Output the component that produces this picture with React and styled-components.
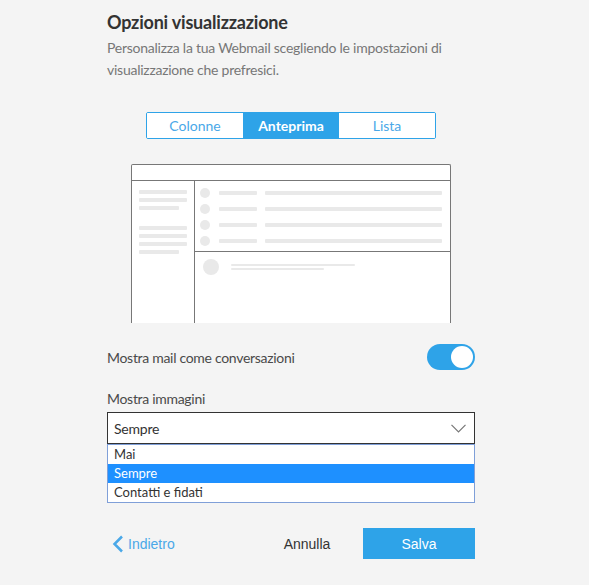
import React, { useState } from "react";
import styled, { createGlobalStyle } from "styled-components";

const GlobalStyle = createGlobalStyle`
  html, body {
    margin: 0;
    padding: 0;
    background: #f4f4f4;
  }
  body {
    font-family: Lato, "Open Sans", sans-serif;
  }
`;

const Page = styled.div`
  width: 368px;
  margin-left: 107px;
  padding-top: 10px;
`;

const Title = styled.h1`
  margin: 0;
  font-size: 18px;
  line-height: 24px;
  font-weight: 700;
  letter-spacing: -0.2px;
  color: #333;
`;

const Description = styled.p`
  margin: 3px 0 0;
  font-size: 14px;
  line-height: 22px;
  letter-spacing: -0.25px;
  color: #777;
`;

const Tabs = styled.div`
  display: flex;
  width: 288px;
  margin: 31px auto 0;
  border: 1px solid #2ea3e8;
  border-radius: 2px;
  background: #fff;
  overflow: hidden;
`;

const Tab = styled.button`
  flex: 1;
  height: 25px;
  border: 0;
  padding: 0;
  font-family: inherit;
  font-size: 14px;
  font-weight: ${(p) => (p.$active ? 700 : 400)};
  color: ${(p) => (p.$active ? "#fff" : "#4aa8e8")};
  background: ${(p) => (p.$active ? "#2ea3e8" : "#fff")};
  cursor: pointer;
`;

const Preview = styled.div`
  width: 318px;
  height: 158px;
  margin: 25px auto 0;
  border: 1px solid #777;
  border-bottom: 0;
  border-radius: 2px 2px 0 0;
  background: #fff;
  display: flex;
  flex-direction: column;
`;

const PreviewHeader = styled.div`
  height: 15px;
  border-bottom: 1px solid #777;
`;

const PreviewBody = styled.div`
  flex: 1;
  display: flex;
`;

const Sidebar = styled.div`
  width: 63px;
  border-right: 1px solid #777;
  padding: 9px 0 0 7px;
  box-sizing: border-box;
  display: flex;
  flex-direction: column;
  gap: 4px;
`;

const SideGroup = styled.div`
  display: flex;
  flex-direction: column;
  gap: 4px;
  margin-bottom: ${(p) => (p.$last ? 0 : "12px")};
`;

const Bar = styled.div`
  width: ${(p) => p.$w}px;
  height: ${(p) => p.$h || 4}px;
  margin-left: ${(p) => p.$ml || 0}px;
  background: #e9e9e9;
  border-radius: 1px;
`;

const MainPane = styled.div`
  flex: 1;
  display: flex;
  flex-direction: column;
`;

const MailList = styled.div`
  height: 71px;
  border-bottom: 1px solid #777;
  padding: 7px 0 0 5px;
  box-sizing: border-box;
  display: flex;
  flex-direction: column;
  gap: 6px;
`;

const MailRow = styled.div`
  display: flex;
  align-items: center;
  height: 10px;
`;

const Dot = styled.div`
  width: ${(p) => p.$size}px;
  height: ${(p) => p.$size}px;
  border-radius: 50%;
  background: #e9e9e9;
  flex-shrink: 0;
`;

const Reading = styled.div`
  display: flex;
  align-items: center;
  padding: 7px 0 0 8px;
  gap: 12px;
`;

const ReadingLines = styled.div`
  display: flex;
  flex-direction: column;
  gap: 2px;
`;

const ToggleRow = styled.div`
  margin-top: 21px;
  display: flex;
  align-items: center;
  justify-content: space-between;
`;

const Label = styled.span`
  font-size: 14px;
  letter-spacing: -0.3px;
  color: #4a4a4a;
`;

const Switch = styled.button`
  width: 48px;
  height: 26px;
  border: 0;
  border-radius: 13px;
  background: ${(p) => (p.$on ? "#2ea3e8" : "#ccc")};
  display: flex;
  align-items: center;
  justify-content: ${(p) => (p.$on ? "flex-end" : "flex-start")};
  padding: 0 2px;
  box-sizing: border-box;
  cursor: pointer;
`;

const Knob = styled.span`
  width: 22px;
  height: 22px;
  border-radius: 50%;
  background: #fff;
`;

const Field = styled.div`
  margin-top: 20px;
  display: flex;
  flex-direction: column;
  gap: 5px;
`;

const SelectWrap = styled.div`
  position: relative;
`;

const SelectBox = styled.div`
  height: 30px;
  border: 1px solid #333;
  background: #fff;
  display: flex;
  align-items: center;
  justify-content: space-between;
  padding: 0 8px 0 6px;
  font-size: 14px;
  letter-spacing: -0.2px;
  color: #333;
`;

const Menu = styled.ul`
  position: absolute;
  left: 0;
  right: 0;
  top: 32px;
  margin: 0;
  padding: 0;
  list-style: none;
  background: #fff;
  border: 1px solid #7f9fd8;
`;

const MenuItem = styled.li`
  height: 19px;
  line-height: 19px;
  padding-left: 6px;
  font-size: 13px;
  color: ${(p) => (p.$selected ? "#fff" : "#333")};
  background: ${(p) => (p.$selected ? "#1e90ff" : "transparent")};
`;

const Footer = styled.div`
  margin-top: 84px;
  display: flex;
  align-items: center;
`;

const BackLink = styled.a`
  display: flex;
  align-items: center;
  gap: 4px;
  margin-left: 5px;
  font-family: "Liberation Sans", Arial, sans-serif;
  font-size: 14px;
  color: #4aa8e8;
  cursor: pointer;
`;

const Spacer = styled.div`
  flex: 1;
`;

const Button = styled.button`
  width: 112px;
  height: 31px;
  border: 0;
  padding: 0;
  font-family: "Liberation Sans", Arial, sans-serif;
  font-size: 14px;
  color: ${(p) => (p.$primary ? "#fff" : "#333")};
  background: ${(p) => (p.$primary ? "#2ea3e8" : "transparent")};
  cursor: pointer;
`;

const ChevronDown = () => (
  <svg width="15" height="9" viewBox="0 0 15 9">
    <path d="M0.5 0.8 L7.5 7.8 L14.5 0.8" fill="none" stroke="#777" strokeWidth="1.2" />
  </svg>
);

const ChevronLeft = () => (
  <svg width="12" height="18" viewBox="0 0 12 18">
    <path d="M10 1.5 L2.5 9 L10 16.5" fill="none" stroke="#4aa8e8" strokeWidth="2.5" />
  </svg>
);

const tabs = ["Colonne", "Anteprima", "Lista"];
const options = ["Mai", "Sempre", "Contatti e fidati"];

export default function App() {
  const [tab, setTab] = useState("Anteprima");
  const [conv, setConv] = useState(true);
  const [images, setImages] = useState("Sempre");

  return (
    <Page>
      <GlobalStyle />
      <Title>Opzioni visualizzazione</Title>
      <Description>
        Personalizza la tua Webmail scegliendo le impostazioni di visualizzazione che prefresici.
      </Description>

      <Tabs>
        {tabs.map((t) => (
          <Tab key={t} $active={t === tab} onClick={() => setTab(t)}>
            {t}
          </Tab>
        ))}
      </Tabs>

      <Preview>
        <PreviewHeader />
        <PreviewBody>
          <Sidebar>
            <SideGroup>
              <Bar $w={48} />
              <Bar $w={48} />
              <Bar $w={40} />
            </SideGroup>
            <SideGroup $last>
              <Bar $w={48} />
              <Bar $w={48} />
              <Bar $w={48} />
              <Bar $w={40} />
            </SideGroup>
          </Sidebar>
          <MainPane>
            <MailList>
              {[0, 1, 2, 3].map((i) => (
                <MailRow key={i}>
                  <Dot $size={10} />
                  <Bar $w={38} $ml={9} />
                  <Bar $w={177} $ml={8} />
                </MailRow>
              ))}
            </MailList>
            <Reading>
              <Dot $size={16} />
              <ReadingLines>
                <Bar $w={124} $h={2} />
                <Bar $w={93} $h={2} />
              </ReadingLines>
            </Reading>
          </MainPane>
        </PreviewBody>
      </Preview>

      <ToggleRow>
        <Label>Mostra mail come conversazioni</Label>
        <Switch $on={conv} onClick={() => setConv(!conv)}>
          <Knob />
        </Switch>
      </ToggleRow>

      <Field>
        <Label>Mostra immagini</Label>
        <SelectWrap>
          <SelectBox>
            {images}
            <ChevronDown />
          </SelectBox>
          <Menu>
            {options.map((o) => (
              <MenuItem key={o} $selected={o === images} onClick={() => setImages(o)}>
                {o}
              </MenuItem>
            ))}
          </Menu>
        </SelectWrap>
      </Field>

      <Footer>
        <BackLink>
          <ChevronLeft />
          Indietro
        </BackLink>
        <Spacer />
        <Button>Annulla</Button>
        <Button $primary>Salva</Button>
      </Footer>
    </Page>
  );
}
